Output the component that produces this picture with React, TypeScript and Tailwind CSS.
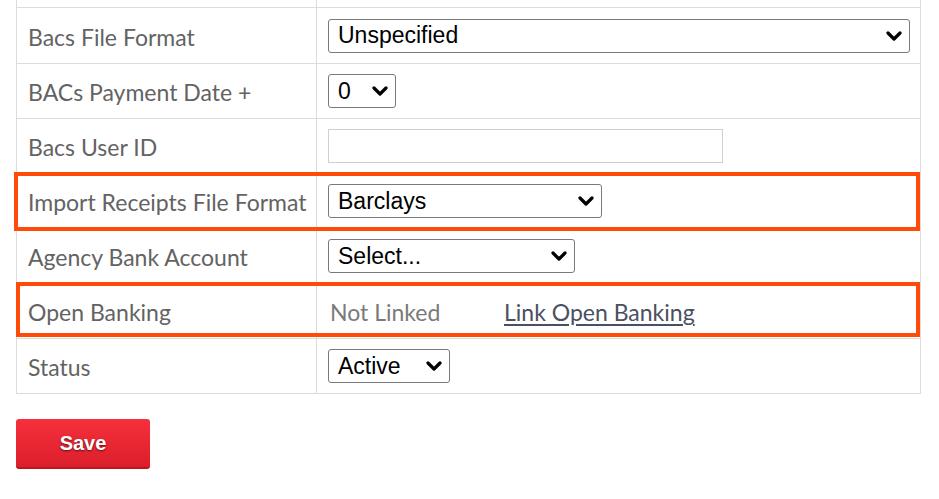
import React from "react";

const labelFont = { fontFamily: "Lato, 'Open Sans', sans-serif" };
const inputFont = { fontFamily: "'Liberation Sans', Arial, sans-serif" };

const Chevron = () => (
  <svg width="16" height="10" viewBox="0 0 16 10" className="shrink-0">
    <path d="M2 2 L8 8 L14 2" fill="none" stroke="#000" strokeWidth="3.2" strokeLinecap="round" strokeLinejoin="round" />
  </svg>
);

const FakeSelect = ({ value, width }: { value: string; width: string }) => (
  <div
    className={`${width} h-[34px] flex items-center justify-between pl-[9px] pr-[7px] bg-white border border-[#7a7a7a] rounded-[3px] text-[23px] text-black`}
    style={inputFont}
  >
    <span className="leading-none">{value}</span>
    <Chevron />
  </div>
);

interface RowProps {
  label: string;
  height: string;
  children?: React.ReactNode;
}

const Row = ({ label, height, children }: RowProps) => (
  <div className={`flex ${height} border-b border-[#dcdcdc]`}>
    <div
      className="w-[300px] shrink-0 flex items-center pl-[11px] pt-[3px] border-r border-[#dcdcdc] text-[23px] text-[#636363]"
      style={labelFont}
    >
      {label}
    </div>
    <div className="flex-1 flex items-center pl-[11px]">{children}</div>
  </div>
);

export default function App() {
  return (
    <div className="w-[939px] h-[499px] bg-white overflow-hidden">
      <div className="relative ml-4 w-[905px] border-x border-[#dcdcdc]">
        <div className="flex h-[8px] border-b border-[#dcdcdc]">
          <div className="w-[300px] border-r border-[#dcdcdc]" />
        </div>

        <Row label="Bacs File Format" height="h-[56px]">
          <FakeSelect value="Unspecified" width="w-[582px]" />
        </Row>
        <Row label="BACs Payment Date +" height="h-[55px]">
          <FakeSelect value="0" width="w-[68px]" />
        </Row>
        <Row label="Bacs User ID" height="h-[55px]">
          <div className="w-[395px] h-[34px] border border-[#cfcfcf] bg-white" />
        </Row>
        <Row label="Import Receipts File Format" height="h-[55px]">
          <FakeSelect value="Barclays" width="w-[274px]" />
        </Row>
        <Row label="Agency Bank Account" height="h-[55px]">
          <FakeSelect value="Select..." width="w-[247px]" />
        </Row>
        <Row label="Open Banking" height="h-[55px]">
          <div className="flex items-center pt-[3px] text-[23px]" style={labelFont}>
            <span className="text-[#7a7a7a] pl-[2px] w-[176px]">Not Linked</span>
            <span className="text-[#4a5060] underline underline-offset-[3px]">Link Open Banking</span>
          </div>
        </Row>
        <Row label="Status" height="h-[55px]">
          <FakeSelect value="Active" width="w-[122px]" />
        </Row>

        {/* highlight boxes */}
        <div className="absolute left-[-3px] top-[172px] w-[906px] h-[59px] border-4 border-[#ff4a0a]" />
        <div className="absolute left-[-1px] top-[282px] w-[904px] h-[55px] border-4 border-[#ff4a0a]" />
      </div>

      <div className="ml-4 mt-[25px]">
        <button
          className="w-[134px] h-[50px] rounded-[3px] bg-gradient-to-b from-[#f5303c] to-[#dc1e2b] border-b-2 border-[#b81722] text-white font-bold text-[20px] [text-shadow:0_1px_2px_rgba(0,0,0,0.6)]"
          style={inputFont}
        >
          Save
        </button>
      </div>
    </div>
  );
}
